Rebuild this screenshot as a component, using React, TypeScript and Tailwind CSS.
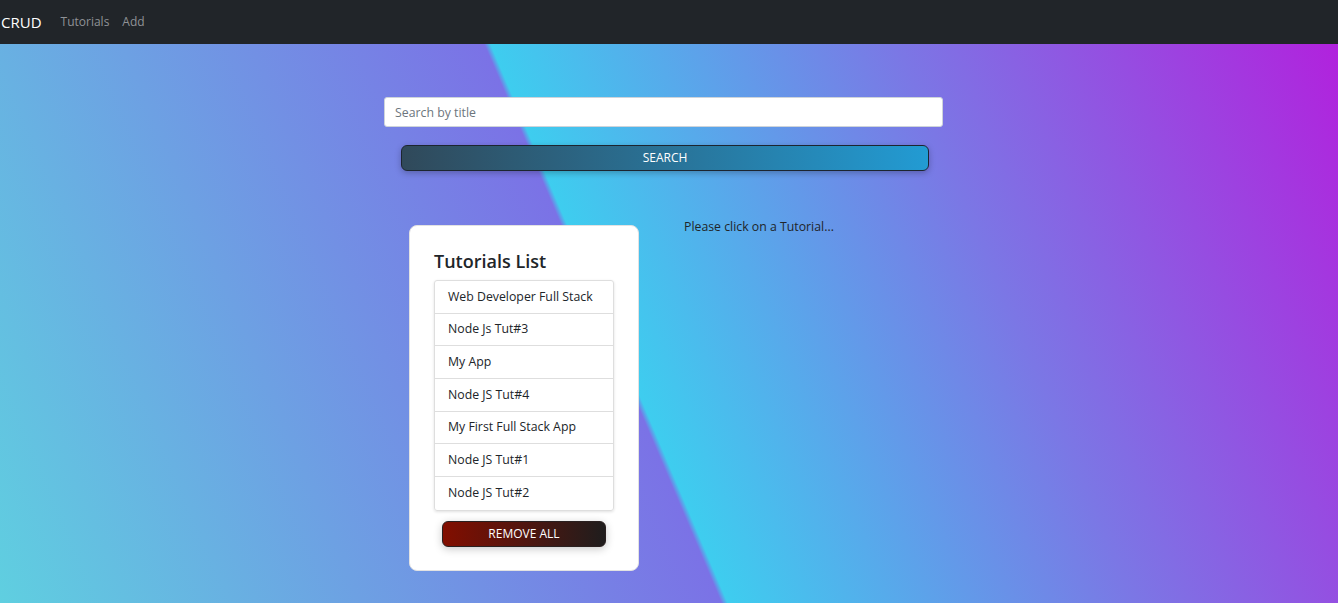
const tutorials = [
  'Web Developer Full Stack',
  'Node Js Tut#3',
  'My App',
  'Node JS Tut#4',
  'My First Full Stack App',
  'Node JS Tut#1',
  'Node JS Tut#2',
];

export default function App() {
  return (
    <div className="min-h-[603px] font-['Open_Sans',sans-serif] text-[#212529]">
      <nav className="h-[44px] bg-[#212529] flex items-center">
        <span className="pl-[1px] text-[15px] text-white">CRUD</span>
        <div className="flex items-center gap-[13px] ml-[19px] text-[12px] text-[#8f9296]">
          <span>Tutorials</span>
          <span>Add</span>
        </div>
      </nav>

      <main className="h-[559px] bg-[linear-gradient(67deg,#5fcfe0_0%,#7b72e6_45.8%,#3ecdef_46.2%,#7b77e5_72%,#b122dd_100%)]">
        <div className="pt-[53px] ml-[384px] w-[559px]">
          <input
            type="text"
            placeholder="Search by title"
            className="w-full h-[30px] px-[10px] bg-white rounded-[3px] border border-[#ced4da] text-[12.3px] placeholder:text-[#6c757d] outline-none"
          />
          <div className="pl-[17px] pr-[14px] mt-[17px]">
            <button className="w-full h-[26px] rounded-[6px] border border-[#1c2530] bg-[linear-gradient(to_right,#30495a,#229bd3)] text-white text-[12px] shadow-[0_2px_6px_rgba(0,0,0,0.25)]">
              SEARCH
            </button>
          </div>
        </div>

        <div className="flex items-start ml-[409px] mt-[54px]">
          <div className="w-[230px] bg-white rounded-[8px] border border-[#e2e2e2] pt-[24px] px-[24px] pb-[23px]">
            <h4 className="text-[18px] font-semibold leading-[23px] mb-[7px]">Tutorials List</h4>
            <ul className="border border-[#dedede] rounded-[3px] shadow-[0_1px_3px_rgba(0,0,0,0.12)] divide-y divide-[#dedede]">
              {tutorials.map((t) => (
                <li key={t} className="h-[32.7px] flex items-center pl-[13px] text-[12.3px]">
                  {t}
                </li>
              ))}
            </ul>
            <div className="px-[8px] mt-[9px]">
              <button className="w-full h-[26px] rounded-[6px] border border-[#2a2020] bg-[linear-gradient(to_right,#820e00,#1f1d1d)] text-white text-[12px] shadow-[0_2px_8px_rgba(0,0,0,0.22)]">
                REMOVE ALL
              </button>
            </div>
          </div>
          <p className="ml-[45px] -mt-[8px] text-[12.3px] leading-[19px]">Please click on a Tutorial...</p>
        </div>
      </main>
    </div>
  );
}
